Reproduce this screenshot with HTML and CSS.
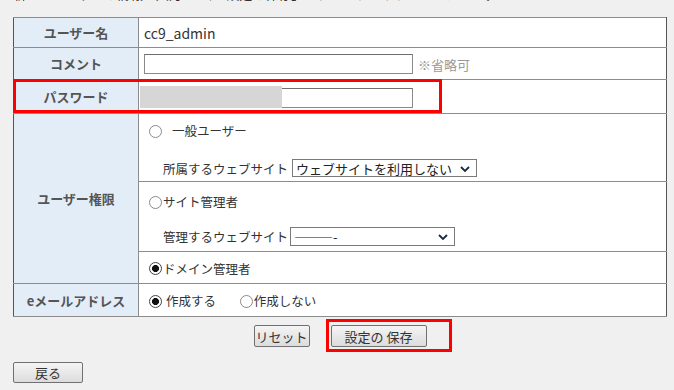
FILE: index.html
```html
<!DOCTYPE html>
<html lang="ja">
<head>
    <meta charset="UTF-8">
    <meta name="viewport" content="width=device-width, initial-scale=1.0">
    <title>ユーザーの追加</title>
    <link rel="stylesheet" href="styles.css">
</head>
<body>
    <p class="lead">新しいユーザーの情報を入力して、「設定の保存」ボタンをクリックしてください。</p>

    <div class="form-wrap">
        <table class="user-form">
            <colgroup>
                <col class="col-label">
                <col>
            </colgroup>
            <tr class="row-name">
                <th>ユーザー名</th>
                <td class="plain">cc9_admin</td>
            </tr>
            <tr class="row-comment">
                <th>コメント</th>
                <td><input type="text" class="text-in"><span class="note">※省略可</span></td>
            </tr>
            <tr class="row-pass">
                <th>パスワード</th>
                <td>
                    <span class="pass-box">
                        <input type="password" class="text-in" value="">
                        <span class="masked"></span>
                    </span>
                </td>
            </tr>
            <tr class="row-perm-user">
                <th rowspan="3">ユーザー権限</th>
                <td class="perm">
                    <label class="opt"><input type="radio" name="perm"><span class="spaced">一般ユーザー</span></label>
                    <div class="sub">
                        <span>所属するウェブサイト</span>
                        <span class="select wide">
                            <select><option>ウェブサイトを利用しない</option></select>
                            <svg viewBox="0 0 10 6" width="10" height="6"><path d="M1 1 L5 5 L9 1" fill="none" stroke="#1b2b3f" stroke-width="1.8"/></svg>
                        </span>
                    </div>
                </td>
            </tr>
            <tr class="row-perm-site">
                <td class="perm perm-site">
                    <label class="opt"><input type="radio" name="perm"><span>サイト管理者</span></label>
                    <div class="sub">
                        <span>管理するウェブサイト</span>
                        <span class="select">
                            <select><option>―――-</option></select>
                            <svg viewBox="0 0 10 6" width="10" height="6"><path d="M1 1 L5 5 L9 1" fill="none" stroke="#1b2b3f" stroke-width="1.8"/></svg>
                        </span>
                    </div>
                </td>
            </tr>
            <tr class="row-perm-domain">
                <td><label class="opt"><input type="radio" name="perm" checked><span>ドメイン管理者</span></label></td>
            </tr>
            <tr class="row-mail">
                <th>eメールアドレス</th>
                <td>
                    <label class="opt"><input type="radio" name="mail" checked><span class="gap">作成する</span></label>
                    <label class="opt next"><input type="radio" name="mail"><span>作成しない</span></label>
                </td>
            </tr>
        </table>
        <div class="highlight hl-pass"></div>
    </div>

    <div class="actions">
        <button class="btn btn-reset">リセット</button>
        <span class="hl-save"><button class="btn btn-save">設定の 保存</button></span>
    </div>

    <button class="btn btn-back">戻る</button>
</body>
</html>
```

FILE: styles.css
```css
body {
    margin: 0;
    padding: 0 7px 0 13px;
    background-color: #f0f0f0;
    font-family: "Noto Sans CJK JP", "Noto Sans", sans-serif;
    font-size: 12.5px;
    color: #333;
    overflow: hidden;
}
.lead {
    margin: -14px 0 15px;
    line-height: 16px;
    font-size: 13px;
    white-space: nowrap;
}
.form-wrap {
    position: relative;
}
.user-form {
    width: 654px;
    table-layout: fixed;
    border-collapse: collapse;
    border: 1px solid #555;
    background: #fff;
}
.col-label {
    width: 125px;
}
.user-form th {
    background: #e3edf8;
    border: 1px solid #8c8c8c;
    border-left-color: #555;
    color: #555;
    font-size: 13px;
    font-weight: bold;
    text-align: center;
    padding: 0;
}
.user-form td {
    border: 1px solid #8c8c8c;
    border-right-color: #555;
    padding: 0 5px;
    text-align: left;
}
.row-name { height: 30px; }
.row-comment { height: 32px; }
.row-pass { height: 34px; }
.row-perm-user { height: 68px; }
.row-perm-site { height: 70px; }
.row-perm-domain { height: 32px; }
.row-mail { height: 33px; }

.plain {
    font-size: 14px;
}
.text-in {
    box-sizing: border-box;
    width: 269px;
    height: 20px;
    margin: 0;
    border: 1px solid #8a8a8a;
    border-top-color: #6e6e6e;
    background: #fff;
    vertical-align: middle;
}
.note {
    margin-left: 5px;
    color: #9a9a9a;
    font-size: 13px;
    vertical-align: middle;
}
.pass-box {
    position: relative;
    display: inline-block;
    vertical-align: middle;
}
.masked {
    position: absolute;
    left: -4px;
    top: 0;
    width: 142px;
    height: 22px;
    background: #d6d6d6;
}

.opt {
    display: inline-flex;
    align-items: center;
    height: 18px;
    line-height: 18px;
    vertical-align: middle;
}
.opt input[type="radio"] {
    appearance: none;
    -webkit-appearance: none;
    box-sizing: border-box;
    width: 13px;
    height: 13px;
    margin: 0 1px 0 5px;
    border: 1px solid #8a8a8a;
    border-radius: 50%;
    background: #fff;
}
.opt input[type="radio"]:checked {
    border-color: #444;
    background: radial-gradient(circle, #111 0 3.2px, #fff 3.8px);
}
.opt .spaced {
    margin-left: 9px;
}
.opt .gap {
    margin-left: 3px;
}
.opt.next {
    margin-left: 16px;
}

.user-form .perm {
    vertical-align: top;
    padding-top: 8px;
}
.perm .opt {
    display: flex;
}
.perm .sub {
    margin-top: 19px;
    padding-left: 19px;
    display: flex;
    align-items: center;
    height: 18px;
}
.user-form .perm-site {
    padding-top: 11px;
}
.perm-site .sub {
    margin-top: 16px;
}

.select {
    position: relative;
    display: inline-block;
    margin-left: 2px;
    height: 19px;
}
.select select {
    appearance: none;
    -webkit-appearance: none;
    box-sizing: border-box;
    width: 165px;
    height: 19px;
    margin: 0;
    padding: 0 20px 0 3px;
    border: 1px solid #7a7a7a;
    border-radius: 0;
    background: #fff;
    font-family: inherit;
    font-size: 13px;
    line-height: 17px;
    color: #222;
}
.select.wide {
    height: 18px;
    margin-left: 4px;
}
.select.wide select {
    width: 185px;
    height: 18px;
}
.select svg {
    position: absolute;
    right: 7px;
    top: 7px;
}

.highlight {
    position: absolute;
    border: 3px solid #f00;
    pointer-events: none;
}
.hl-pass {
    left: 0;
    top: 62px;
    width: 423px;
    height: 28px;
}

.btn {
    box-sizing: border-box;
    height: 22px;
    margin: 0;
    padding: 0;
    border: 1px solid #707070;
    border-radius: 2px;
    background: linear-gradient(#f4f4f4, #dcdcdc);
    font-family: inherit;
    font-size: 13px;
    color: #333;
}
.actions {
    display: flex;
    justify-content: center;
    align-items: center;
    width: 654px;
    margin-top: 8px;
    gap: 21px;
}
.btn-reset {
    width: 56px;
}
.btn-save {
    width: 96px;
}
.hl-save {
    display: inline-block;
    border: 3px solid #f00;
    padding: 3px 22px 2px 2px;
    margin: -6px -25px -5px -5px;
}
.btn-back {
    display: block;
    width: 70px;
    height: 21px;
    margin-top: 15px;
}
```
